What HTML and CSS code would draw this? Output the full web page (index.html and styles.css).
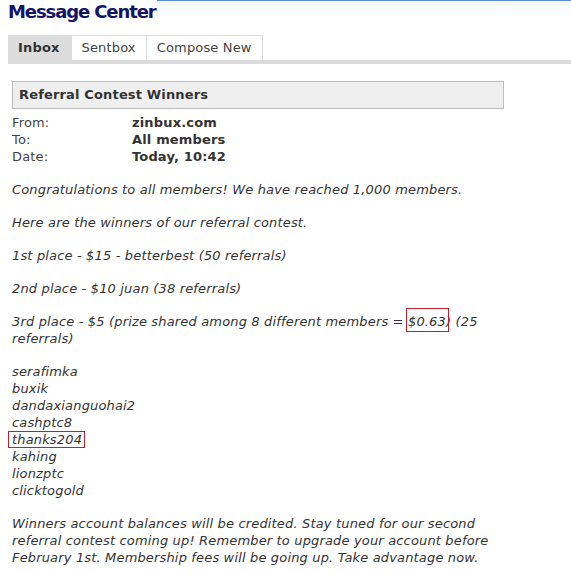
FILE: index.html
```html
<!DOCTYPE html>
<html>
<head>
<meta charset="utf-8">
<link rel="stylesheet" href="styles.css">
</head>
<body>
<div class="header">
  <h1 class="title">Message Center</h1>
  <div class="header-rule"></div>
</div>
<div class="tabs">
  <span class="tab active">Inbox</span>
  <span class="tab">Sentbox</span>
  <span class="tab">Compose New</span>
</div>
<div class="message">
  <div class="subject">Referral Contest Winners</div>
  <div class="meta">
    <span class="label">From:</span><span class="value">zinbux.com</span>
    <span class="label">To:</span><span class="value">All members</span>
    <span class="label">Date:</span><span class="value">Today, 10:42</span>
  </div>
  <div class="body">
    <p>Congratulations to all members! We have reached 1,000 members.</p>
    <p>Here are the winners of our referral contest.</p>
    <p>1st place - $15 - betterbest (50 referrals)</p>
    <p>2nd place - $10 juan (38 referrals)</p>
    <p>3rd place - $5 (prize shared among 8 different members = <span class="mark mark-tall">$0.63</span>) (25 referrals)</p>
    <p>serafimka<br>buxik<br>dandaxianguohai2<br>cashptc8<br><span class="mark mark-name">thanks204</span><br>kahing<br>lionzptc<br>clicktogold</p>
    <p>Winners account balances will be credited. Stay tuned for our second referral contest coming up! Remember to upgrade your account before February 1st. Membership fees will be going up. Take advantage now.</p>
  </div>
</div>
</body>
</html>
```
FILE: styles.css
```css
html, body {
  margin: 0;
  padding: 0;
  background: #fff;
}
body {
  font-family: "DejaVu Sans", Verdana, sans-serif;
  font-size: 13px;
  letter-spacing: 0.16px;
  color: #333;
  overflow: hidden;
}
.header {
  display: flex;
  align-items: flex-start;
  height: 30px;
}
.title {
  margin: 0;
  padding: 0 1px 0 8px;
  font-size: 18px;
  line-height: 24px;
  font-weight: bold;
  color: #141466;
  white-space: nowrap;
  letter-spacing: -1.1px;
}
.header-rule {
  flex: 1;
  height: 14px;
  border-top: 1px solid #5b8bd6;
  background: linear-gradient(#f4f8ff, #fdfeff);
}
.tabs {
  display: flex;
  margin: 5px 0 0 8px;
  border-bottom: 4px solid #dcdcdc;
}
.tab {
  padding: 0 10px;
  height: 24px;
  line-height: 23px;
  border: 1px solid #dcdcdc;
  border-left: none;
  border-bottom: none;
  color: #444;
}
.tab.active {
  background: #dcdcdc;
  font-weight: bold;
  color: #333;
  border-color: #dcdcdc;
  padding: 0 11px 0 10px;
}
.message {
  padding: 17px 0 0 12px;
}
.subject {
  width: 484px;
  height: 26px;
  line-height: 26px;
  padding-left: 6px;
  background: #efefef;
  border: 1px solid #bdbdbd;
  font-weight: bold;
  color: #333;
}
.meta {
  display: grid;
  grid-template-columns: 120px auto;
  line-height: 17px;
  margin-top: 5px;
}
.label {
  color: #444;
}
.value {
  font-weight: bold;
  color: #333;
}
.body {
  width: 490px;
  margin-top: 16px;
  font-style: italic;
  line-height: 17px;
  color: #333;
}
.body p {
  margin: 0 0 16px 0;
}
.mark {
  position: relative;
}
.mark::after {
  content: "";
  position: absolute;
  border: 1px solid #c41e2a;
}
.mark-tall::after {
  left: -2px;
  right: -3px;
  top: -6px;
  bottom: -3px;
}
.mark-name::after {
  left: -4px;
  right: -3px;
  top: -1px;
  bottom: -1px;
}
```
